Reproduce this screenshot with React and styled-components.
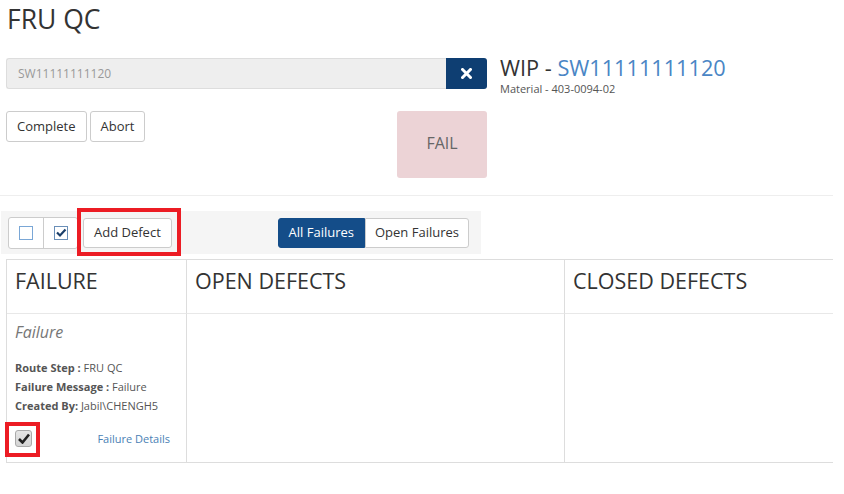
import React from "react";
import styled, { createGlobalStyle } from "styled-components";

const GlobalStyle = createGlobalStyle`
  body {
    margin: 0;
    background: #fff;
    font-family: "Open Sans", "Liberation Sans", sans-serif;
    color: #333;
  }
`;

const Page = styled.div`
  width: 844px;
  height: 494px;
  overflow: hidden;
`;

const Title = styled.h1`
  margin: 0;
  padding: 3px 0 0 7px;
  height: 40px;
  font-size: 26.5px;
  font-weight: 400;
  line-height: 32px;
  color: #333;
`;

const TopSection = styled.div`
  display: flex;
  margin-top: 15px;
  padding-left: 6px;
`;

const LeftCol = styled.div`
  width: 481px;
  display: flex;
  flex-direction: column;
`;

const InputGroup = styled.div`
  display: flex;
  height: 31px;
`;

const ScanInput = styled.div`
  flex: 1;
  background: #eee;
  border: 1px solid #ddd;
  border-right: none;
  border-radius: 3px 0 0 3px;
  color: #999;
  font-size: 12px;
  line-height: 29px;
  padding-left: 11px;
`;

const ClearButton = styled.button`
  width: 41px;
  border: none;
  border-radius: 0 3px 3px 0;
  background: #0e3e72;
  display: flex;
  align-items: center;
  justify-content: center;
  padding: 0;
`;

const ActionRow = styled.div`
  display: flex;
  justify-content: space-between;
  margin-top: 22px;
`;

const ButtonRow = styled.div`
  display: flex;
  gap: 3px;
  align-items: flex-start;
`;

const Button = styled.button`
  height: ${(p) => p.$h || 31}px;
  padding: 0 ${(p) => p.$px || 10}px 2px;
  background: #fff;
  border: 1px solid #ccc;
  border-radius: 3px;
  font-family: "Open Sans", "Liberation Sans", sans-serif;
  font-size: 13px;
  color: #333;
`;

const FailBox = styled.div`
  width: 90px;
  height: 67px;
  padding-bottom: 3px;
  box-sizing: border-box;
  background: #ecd3d6;
  border-radius: 3px;
  display: flex;
  align-items: center;
  justify-content: center;
  font-size: 16px;
  color: #666;
`;

const WipInfo = styled.div`
  margin-left: 13px;
  margin-top: -4px;
`;

const WipTitle = styled.div`
  font-size: 21.7px;
  line-height: 28px;
  color: #333;
`;

const WipLink = styled.span`
  color: #4a86c5;
`;

const Material = styled.div`
  font-size: 11px;
  line-height: 13px;
  color: #555;
`;

const Divider = styled.hr`
  margin: 17px 11px 0 0;
  border: none;
  border-top: 1px solid #eee;
`;

const Well = styled.div`
  box-sizing: border-box;
  margin-top: 15px;
  margin-left: 1px;
  width: 480px;
  height: 43px;
  background: #f5f5f5;
  display: flex;
  align-items: center;
  justify-content: space-between;
  padding: 0 12px 0 7px;
`;

const Group = styled.div`
  display: flex;
  align-items: center;
`;

const CheckGroup = styled.div`
  display: flex;
  height: 30px;
  border: 1px solid #ccc;
  border-radius: 3px;
  background: #fff;
`;

const CheckCell = styled.div`
  width: ${(p) => p.$w}px;
  display: flex;
  align-items: center;
  justify-content: center;
  border-left: ${(p) => (p.$first ? "none" : "1px solid #ccc")};
`;

const Highlight = styled.div`
  position: relative;
  display: flex;
  margin-left: ${(p) => p.$ml || 0}px;
  &::after {
    content: "";
    position: absolute;
    left: ${(p) => p.$l}px;
    right: ${(p) => p.$r}px;
    top: ${(p) => p.$t}px;
    bottom: ${(p) => p.$b}px;
    border: 4px solid #ec1c24;
    pointer-events: none;
  }
`;

const Toggle = styled.div`
  display: flex;
  height: 30px;
`;

const ToggleBtn = styled.div`
  padding: 0 ${(p) => p.$px}px 2px;
  display: flex;
  align-items: center;
  font-size: 13px;
  background: ${(p) => (p.$active ? "#144d89" : "#fff")};
  color: ${(p) => (p.$active ? "#fff" : "#333")};
  border: 1px solid ${(p) => (p.$active ? "#144d89" : "#ccc")};
  border-radius: ${(p) => (p.$active ? "3px 0 0 3px" : "0 3px 3px 0")};
`;

const Table = styled.div`
  margin: 5px 11px 0 6px;
  display: grid;
  grid-template-columns: 179px 378px 1fr;
  grid-template-rows: 54px 148px;
  border-top: 1px solid #ddd;
  border-bottom: 1px solid #ddd;
  border-left: 1px solid #ddd;
`;

const HeadCell = styled.div`
  padding: 7px 0 0 8px;
  font-size: 21.5px;
  line-height: 28px;
  color: #333;
  border-bottom: 1px solid #e8e8e8;
  border-left: ${(p) => (p.$first ? "none" : "1px solid #ddd")};
`;

const BodyCell = styled.div`
  border-left: ${(p) => (p.$first ? "none" : "1px solid #ddd")};
`;

const FailureCard = styled.div`
  padding: 6px 16px 0 8px;
  display: flex;
  flex-direction: column;
  height: 100%;
  box-sizing: border-box;
`;

const CardTitle = styled.div`
  font-size: 16px;
  font-style: italic;
  color: #777;
  line-height: 24px;
`;

const Details = styled.div`
  margin-top: 14px;
  font-size: 11px;
  line-height: 19px;
  color: #555;
`;

const Label = styled.b`
  font-weight: 700;
`;

const CardFooter = styled.div`
  margin-top: 15px;
  display: flex;
  align-items: center;
  justify-content: space-between;
`;

const Checkbox = styled.div`
  width: 15px;
  height: 15px;
  border: 1px solid #aaa;
  border-radius: 3px;
  background: linear-gradient(#e6e6e6, #d4d4d4);
  display: flex;
  align-items: center;
  justify-content: center;
`;

const DetailsLink = styled.a`
  font-size: 11px;
  color: #4a7fb5;
  text-decoration: none;
`;

const XIcon = () => (
  <svg width="11" height="11" viewBox="0 0 11 11">
    <path d="M1.5 1.5 L9.5 9.5 M9.5 1.5 L1.5 9.5" stroke="#fff" strokeWidth="3" strokeLinecap="square" />
  </svg>
);

const BoxIcon = ({ checked }) => (
  <svg width="14" height="14" viewBox="0 0 14 14">
    <rect x="0.5" y="0.5" width="13" height="13" fill="#fff" stroke={checked ? "#6a8fb8" : "#7aa7d6"} />
    {checked && (
      <path d="M3 6.5 L6 9.5 L11.5 3.5" fill="none" stroke="#1b3f6a" strokeWidth="2.2" />
    )}
  </svg>
);

const CheckMark = () => (
  <svg width="12" height="11" viewBox="0 0 12 11">
    <path d="M1 6 L4.5 9.5 L11 1.5" fill="none" stroke="#222" strokeWidth="2.6" />
  </svg>
);

export default function App() {
  return (
    <Page>
      <GlobalStyle />
      <Title>FRU QC</Title>
      <TopSection>
        <LeftCol>
          <InputGroup>
            <ScanInput>SW11111111120</ScanInput>
            <ClearButton>
              <XIcon />
            </ClearButton>
          </InputGroup>
          <ActionRow>
            <ButtonRow>
              <Button>Complete</Button>
              <Button>Abort</Button>
            </ButtonRow>
            <FailBox>FAIL</FailBox>
          </ActionRow>
        </LeftCol>
        <WipInfo>
          <WipTitle>
            WIP - <WipLink>SW11111111120</WipLink>
          </WipTitle>
          <Material>Material - 403-0094-02</Material>
        </WipInfo>
      </TopSection>
      <Divider />
      <Well>
        <Group>
          <CheckGroup>
            <CheckCell $first $w={34}>
              <BoxIcon />
            </CheckCell>
            <CheckCell $w={33}>
              <BoxIcon checked />
            </CheckCell>
          </CheckGroup>
          <Highlight $ml={5} $l={-6} $r={-9} $t={-10} $b={-8}>
            <Button $px={10} $h={30}>Add Defect</Button>
          </Highlight>
        </Group>
        <Toggle>
          <ToggleBtn $active $px={10}>All Failures</ToggleBtn>
          <ToggleBtn $px={9}>Open Failures</ToggleBtn>
        </Toggle>
      </Well>
      <Table>
        <HeadCell $first>FAILURE</HeadCell>
        <HeadCell>OPEN DEFECTS</HeadCell>
        <HeadCell>CLOSED DEFECTS</HeadCell>
        <BodyCell $first>
          <FailureCard>
            <CardTitle>Failure</CardTitle>
            <Details>
              <div>
                <Label>Route Step :</Label> FRU QC
              </div>
              <div>
                <Label>Failure Message :</Label> Failure
              </div>
              <div>
                <Label>Created By:</Label> Jabil\CHENGH5
              </div>
            </Details>
            <CardFooter>
              <Highlight $l={-10} $r={-8} $t={-8} $b={-10}>
                <Checkbox>
                  <CheckMark />
                </Checkbox>
              </Highlight>
              <DetailsLink>Failure Details</DetailsLink>
            </CardFooter>
          </FailureCard>
        </BodyCell>
        <BodyCell />
        <BodyCell />
      </Table>
    </Page>
  );
}
